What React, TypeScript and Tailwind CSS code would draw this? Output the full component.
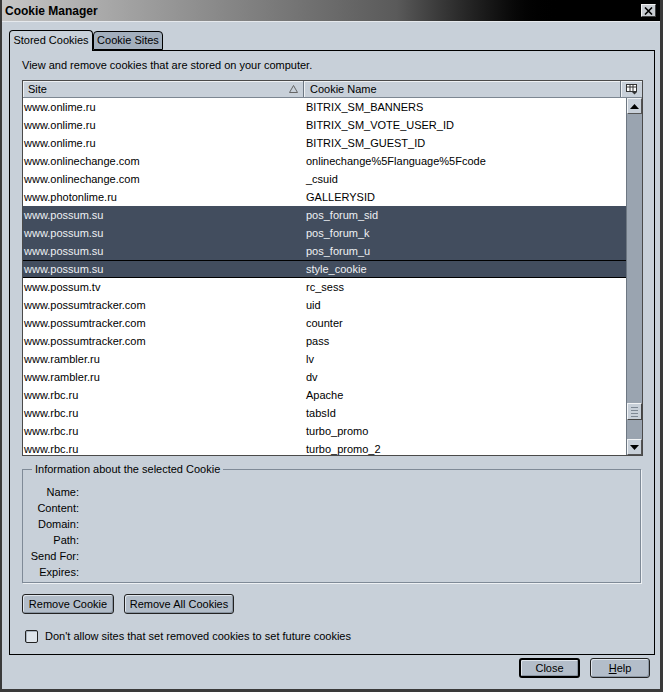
import React from 'react'

const rows: [string, string][] = [
  ['www.onlime.ru', 'BITRIX_SM_BANNERS'],
  ['www.onlime.ru', 'BITRIX_SM_VOTE_USER_ID'],
  ['www.onlime.ru', 'BITRIX_SM_GUEST_ID'],
  ['www.onlinechange.com', 'onlinechange%5Flanguage%5Fcode'],
  ['www.onlinechange.com', '_csuid'],
  ['www.photonlime.ru', 'GALLERYSID'],
  ['www.possum.su', 'pos_forum_sid'],
  ['www.possum.su', 'pos_forum_k'],
  ['www.possum.su', 'pos_forum_u'],
  ['www.possum.su', 'style_cookie'],
  ['www.possum.tv', 'rc_sess'],
  ['www.possumtracker.com', 'uid'],
  ['www.possumtracker.com', 'counter'],
  ['www.possumtracker.com', 'pass'],
  ['www.rambler.ru', 'lv'],
  ['www.rambler.ru', 'dv'],
  ['www.rbc.ru', 'Apache'],
  ['www.rbc.ru', 'tabsId'],
  ['www.rbc.ru', 'turbo_promo'],
  ['www.rbc.ru', 'turbo_promo_2'],
]

const selected = [6, 7, 8, 9]
const focused = 9

const infoLabels = ['Name:', 'Content:', 'Domain:', 'Path:', 'Send For:', 'Expires:']

const Button = ({ label, wide, isDefault }: { label: React.ReactNode; wide: string; isDefault?: boolean }) => (
  <button
    className={`${wide} h-[20px] rounded-[3px] bg-[#b3bdc9] text-black text-[11px] leading-none flex items-center justify-center shadow-[inset_1px_1px_0_#dfe5ec,inset_-1px_-1px_0_#8a95a2] ${
      isDefault ? 'border-2 border-black' : 'border border-[#222]'
    }`}
  >
    {label}
  </button>
)

export default function App() {
  return (
    <div className="w-[663px] h-[692px] bg-[#c8d0d9] border-l-2 border-r-[3px] border-b-[3px] border-[#3a3a3a] flex flex-col font-['Liberation_Sans',Arial,sans-serif] text-[11px] text-black overflow-hidden">
      {/* Title bar */}
      <div className="h-[22px] shrink-0 flex items-center justify-between pl-[3px] pr-[4px] bg-gradient-to-r from-[#c6c6c6] via-[#5a5a5a] via-60% to-black to-85% border-b border-[#e6e9ed]">
        <span className="font-bold text-[12px]">Cookie Manager</span>
        <div className="w-[15px] h-[13px] bg-[#c8ccd1] border border-t-[#f0f0f0] border-l-[#f0f0f0] border-r-[#404040] border-b-[#404040] flex items-center justify-center">
          <svg width="9" height="8" viewBox="0 0 9 8">
            <path d="M1 0.5 L8 7.5 M8 0.5 L1 7.5" stroke="#000" strokeWidth="1.6" />
          </svg>
        </div>
      </div>

      <div className="flex-1 flex flex-col pl-[7px] pr-[5px] pt-[7px]">
        {/* Tabs */}
        <div className="flex items-end h-[21px] relative z-10">
          <div className="h-[21px] w-[84px] bg-[#c8d0d9] border border-b-0 border-black rounded-t-[4px] flex items-center justify-center -mb-px pb-px">
            Stored Cookies
          </div>
          <div className="h-[19px] w-[70px] bg-[#a3afbd] border border-black rounded-t-[4px] flex items-center justify-center">
            Cookie Sites
          </div>
        </div>

        {/* Panel */}
        <div className="h-[605px] border border-black pl-[12px] pr-[11px] flex flex-col">
          <div className="pt-[8px] h-[29px] leading-[13px]">View and remove cookies that are stored on your computer.</div>

          {/* Tree */}
          <div className="h-[376px] border border-[#4a4a4a] bg-white flex flex-col overflow-hidden">
            <div className="h-[17px] shrink-0 flex bg-[#c8d0d9] border-b border-[#7d8792]">
              <div className="w-[281px] flex items-center justify-between pl-[5px] pr-[5px] border-r border-[#6d7782] shadow-[inset_1px_1px_0_#eef1f4]">
                <span>Site</span>
                <svg width="9" height="8" viewBox="0 0 9 8">
                  <path d="M4.5 0.5 L8.5 7.5 L0.5 7.5 Z" fill="none" stroke="#666" />
                </svg>
              </div>
              <div className="w-[317px] flex items-center pl-[6px] border-r border-[#6d7782] shadow-[inset_1px_1px_0_#eef1f4]">
                Cookie Name
              </div>
              <div className="flex-1 flex items-center justify-center shadow-[inset_1px_1px_0_#eef1f4]">
                <svg width="12" height="11" viewBox="0 0 12 11">
                  <rect x="0.5" y="0.5" width="10" height="7" fill="#fff" stroke="#333" />
                  <path d="M0.5 3 H10.5 M4 0.5 V7.5 M7 0.5 V7.5" stroke="#333" />
                  <path d="M6 8 L11 8 L8.5 10.5 Z" fill="#333" />
                </svg>
              </div>
            </div>

            <div className="flex-1 flex min-h-0">
              <div className="flex-1 flex flex-col min-w-0">
                {rows.map(([site, name], i) => {
                  const sel = selected.includes(i)
                  return (
                    <div
                      key={i}
                      className={`h-[18px] shrink-0 flex items-center ${
                        sel ? 'bg-[#424d5e] text-[#eef0f3]' : ''
                      } ${i === focused ? 'border-y border-black' : ''}`}
                    >
                      <span className="w-[281px] pl-[1px] whitespace-nowrap">{site}</span>
                      <span className="pl-[2px] whitespace-nowrap">{name}</span>
                    </div>
                  )
                })}
              </div>

              {/* Scrollbar */}
              <div className="w-[16px] shrink-0 flex flex-col bg-[#9aa4b0] border-l border-[#6d7782]">
                <div className="h-[16px] shrink-0 bg-[#c8d0d9] border border-t-[#f2f4f6] border-l-[#f2f4f6] border-r-[#555] border-b-[#555] flex items-center justify-center">
                  <svg width="9" height="5" viewBox="0 0 9 5">
                    <path d="M4.5 0 L9 5 L0 5 Z" fill="#000" />
                  </svg>
                </div>
                <div className="h-[289px] shrink-0" />
                <div className="h-[17px] shrink-0 bg-[#c8d0d9] border border-t-[#f2f4f6] border-l-[#f2f4f6] border-r-[#444] border-b-[#444] flex flex-col items-center justify-center gap-[2px]">
                  <div className="w-[7px] h-px bg-[#7d8894]" />
                  <div className="w-[7px] h-px bg-[#7d8894]" />
                  <div className="w-[7px] h-px bg-[#7d8894]" />
                  <div className="w-[7px] h-px bg-[#7d8894]" />
                </div>
                <div className="flex-1" />
                <div className="h-[16px] shrink-0 bg-[#c8d0d9] border border-t-[#f2f4f6] border-l-[#f2f4f6] border-r-[#555] border-b-[#555] flex items-center justify-center">
                  <svg width="9" height="5" viewBox="0 0 9 5">
                    <path d="M0 0 L9 0 L4.5 5 Z" fill="#000" />
                  </svg>
                </div>
              </div>
            </div>
          </div>

          {/* Info group */}
          <fieldset className="mt-[6px] mr-[2px] h-[121px] border border-[#7f8a97] shadow-[1px_1px_0_#eef1f4] pl-0 pr-[2px] pt-[4px]">
            <legend className="px-[3px] ml-[9px] leading-[14px]">Information about the selected Cookie</legend>
            <div className="flex flex-col pt-[4px]">
              {infoLabels.map((l) => (
                <div key={l} className="h-[16px] w-[56px] text-right leading-[16px] whitespace-nowrap">
                  {l}
                </div>
              ))}
            </div>
          </fieldset>

          {/* Buttons */}
          <div className="flex gap-[10px] mt-[11px]">
            <Button label="Remove Cookie" wide="w-[92px]" />
            <Button label="Remove All Cookies" wide="w-[110px]" />
          </div>

          <label className="flex items-center gap-[7px] mt-[14px] pl-[3px]">
            <span className="w-[13px] h-[13px] bg-[#dfe5eb] border border-[#222] rounded-[2px] shadow-[inset_1px_1px_0_#a9b3bf]" />
            <span>Don't allow sites that set removed cookies to set future cookies</span>
          </label>
        </div>

        {/* Dialog buttons */}
        <div className="flex justify-end gap-[10px] pr-[5px] mt-[3px]">
          <Button label="Close" wide="w-[61px]" isDefault />
          <Button
            label={
              <span>
                <span className="underline">H</span>elp
              </span>
            }
            wide="w-[60px]"
          />
        </div>
      </div>
    </div>
  )
}
